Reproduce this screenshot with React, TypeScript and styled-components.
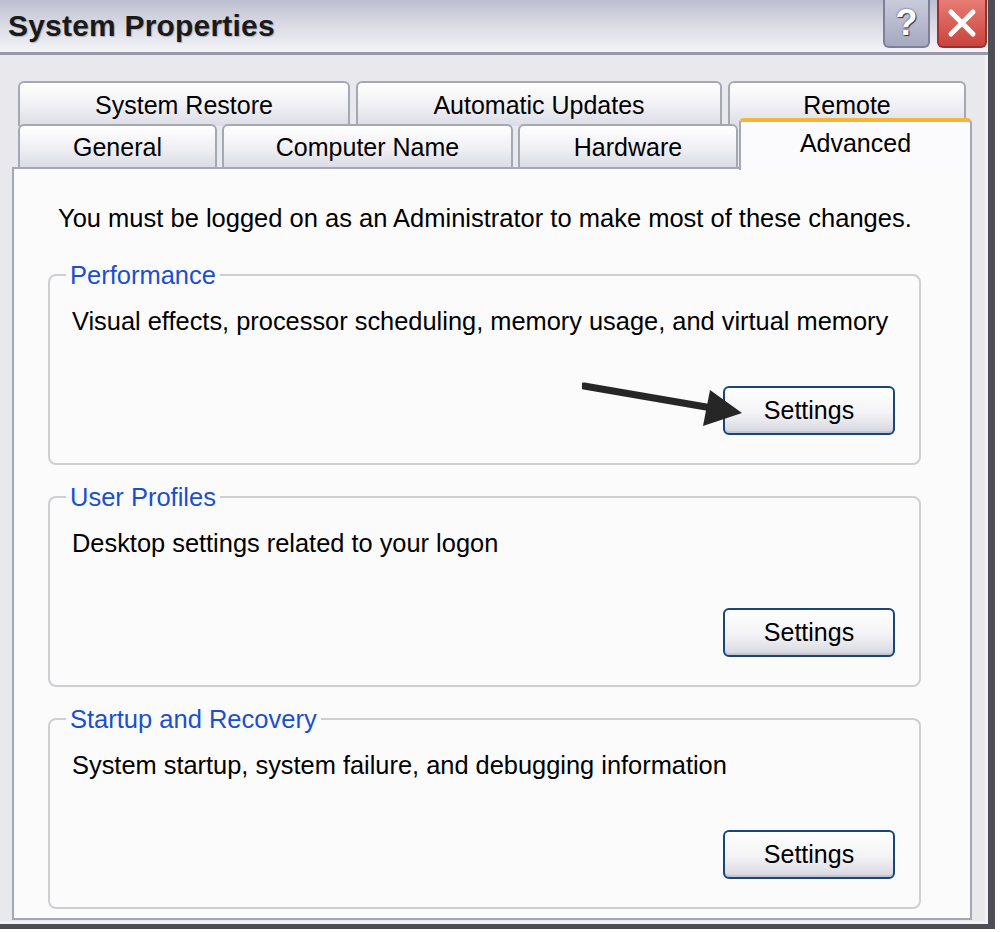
import styled, { createGlobalStyle } from "styled-components";

const GlobalStyle = createGlobalStyle`
  html, body {
    margin: 0;
    padding: 0;
    background: #ffffff;
  }
  body {
    font-family: "Liberation Sans", Arial, sans-serif;
  }
`;

type TabSpec = { label: string; width: number; selected?: boolean };

const backRow: TabSpec[] = [
  { label: "System Restore", width: 332 },
  { label: "Automatic Updates", width: 366 },
  { label: "Remote", width: 238 },
];

const frontRow: TabSpec[] = [
  { label: "General", width: 199 },
  { label: "Computer Name", width: 291 },
  { label: "Hardware", width: 220 },
  { label: "Advanced", width: 233, selected: true },
];

const groups = [
  {
    title: "Performance",
    text: "Visual effects, processor scheduling, memory usage, and virtual memory",
    arrow: true,
  },
  { title: "User Profiles", text: "Desktop settings related to your logon" },
  {
    title: "Startup and Recovery",
    text: "System startup, system failure, and debugging information",
  },
];

export default function App() {
  return (
    <>
      <GlobalStyle />
      <Window>
        <TitleBar>
          <Title>System Properties</Title>
          <Controls>
            <HelpButton>?</HelpButton>
            <CloseButton>
              <svg width="34" height="34" viewBox="0 0 34 34">
                <path
                  d="M6 6 L28 28 M28 6 L6 28"
                  stroke="#ffffff"
                  strokeWidth="5"
                  strokeLinecap="round"
                />
              </svg>
            </CloseButton>
          </Controls>
        </TitleBar>
        <Body>
          <TabRow $front={false}>
            {backRow.map((t) => (
              <Tab key={t.label} $width={t.width}>
                {t.label}
              </Tab>
            ))}
          </TabRow>
          <TabRow $front>
            {frontRow.map((t) =>
              t.selected ? (
                <SelectedTab key={t.label} $width={t.width}>
                  {t.label}
                </SelectedTab>
              ) : (
                <Tab key={t.label} $width={t.width}>
                  {t.label}
                </Tab>
              )
            )}
          </TabRow>
          <Panel>
            <Intro>
              You must be logged on as an Administrator to make most of these
              changes.
            </Intro>
            {groups.map((g) => (
              <Group key={g.title}>
                <Legend>{g.title}</Legend>
                <Description>{g.text}</Description>
                <ButtonRow>
                  <Button>Settings</Button>
                </ButtonRow>
                {g.arrow && <Arrow />}
              </Group>
            ))}
          </Panel>
        </Body>
      </Window>
    </>
  );
}

// hand-drawn pointer from the screenshot, sits over the Performance box
const Arrow = () => (
  <ArrowSvg width="170" height="60" viewBox="0 0 170 60">
    <path d="M2 8 L130 30" stroke="#262626" strokeWidth="7" strokeLinecap="round" />
    <path d="M160 35 L128 12 L121 48 Z" fill="#262626" />
  </ArrowSvg>
);

const Window = styled.div`
  width: 995px;
  height: 929px;
  box-sizing: border-box;
  display: flex;
  flex-direction: column;
  background: #e9e9ed;
  border-right: 7px solid #4d4d55;
  border-bottom: 5px solid #4d4d55;
  box-shadow: inset -3px -3px 0 #f3f3f5;
`;

const TitleBar = styled.div`
  height: 52px;
  flex: none;
  display: flex;
  align-items: flex-start;
  justify-content: space-between;
  background: linear-gradient(#bcbfcf 0%, #d8d9e3 45%, #f4f4f8 100%);
  border-bottom: 3px solid #9899a8;
`;

const Title = styled.div`
  padding: 9px 0 0 8px;
  font-family: "Liberation Sans", Arial, sans-serif;
  font-weight: 700;
  font-size: 30px;
  letter-spacing: 0.2px;
  color: #1a1a1a;
  text-shadow: 1px 1px 1px #b0b0bc;
`;

const Controls = styled.div`
  display: flex;
  gap: 7px;
  padding-right: 1px;
`;

const HelpButton = styled.div`
  width: 47px;
  height: 48px;
  box-sizing: border-box;
  display: flex;
  align-items: center;
  justify-content: center;
  border: 2px solid #7d8098;
  border-top: none;
  border-radius: 0 0 6px 6px;
  background: linear-gradient(#c9cadb, #a7a9c2);
  font-size: 36px;
  font-weight: 700;
  color: #ffffff;
  text-shadow: 0 0 2px #3a3c58, 1px 1px 0 #3a3c58;
`;

const CloseButton = styled.div`
  width: 50px;
  height: 48px;
  box-sizing: border-box;
  display: flex;
  align-items: center;
  justify-content: center;
  border: 2px solid #9a3030;
  border-top: none;
  border-radius: 0 0 6px 6px;
  background: linear-gradient(#e87c74, #c8443c);
`;

const Body = styled.div`
  flex: 1;
  display: flex;
  flex-direction: column;
  padding: 26px 16px 4px 12px;
`;

const TabRow = styled.div<{ $front: boolean }>`
  display: flex;
  align-items: flex-end;
  gap: ${(p) => (p.$front ? 5 : 6)}px;
  height: ${(p) => (p.$front ? 43 : 45)}px;
  margin-left: 6px;
  margin-top: ${(p) => (p.$front ? -2 : 0)}px;
  position: relative;
`;

const Tab = styled.div<{ $width: number }>`
  width: ${(p) => p.$width}px;
  height: 100%;
  box-sizing: border-box;
  display: flex;
  align-items: center;
  justify-content: center;
  padding-top: 2px;
  border: 2px solid #a3a8b4;
  border-bottom: none;
  border-radius: 6px 6px 0 0;
  background: linear-gradient(#ffffff 0%, #f1f1f5 50%, #dcdce6 100%);
  font-size: 25px;
  color: #000000;
`;

const SelectedTab = styled(Tab)`
  height: 52px;
  margin-left: -4px;
  margin-bottom: -3px;
  padding-top: 0;
  padding-bottom: 6px;
  position: relative;
  z-index: 2;
  background: #fbfbfd;
  border-top: 4px solid #f5b537;
  border-radius: 5px 5px 0 0;
`;

const Panel = styled.div`
  flex: 1;
  box-sizing: border-box;
  display: flex;
  flex-direction: column;
  gap: 17px;
  padding: 34px 0 0 34px;
  border: 2px solid #a3a8b4;
  background: #fbfbfb;
`;

const Intro = styled.div`
  margin: 0 0 10px 10px;
  font-size: 25.5px;
  line-height: 30px;
  color: #000000;
`;

const Group = styled.fieldset`
  position: relative;
  width: 873px;
  margin: 0;
  box-sizing: border-box;
  padding: 16px 24px 28px 22px;
  border: 2px solid #cfcfd3;
  border-radius: 8px;
  min-width: 0;
`;

const Legend = styled.legend`
  margin-left: -6px;
  padding: 0 4px;
  font-size: 25.5px;
  line-height: 30px;
  color: #1a4fd0;
`;

const Description = styled.div`
  font-size: 25.4px;
  line-height: 30px;
  color: #000000;
`;

const ButtonRow = styled.div`
  display: flex;
  justify-content: flex-end;
  margin-top: 50px;
`;

const Button = styled.div`
  width: 172px;
  height: 49px;
  box-sizing: border-box;
  display: flex;
  align-items: center;
  justify-content: center;
  border: 2px solid #17457c;
  border-radius: 6px;
  background: linear-gradient(#ffffff 0%, #f3f3f6 55%, #d6d6e0 100%);
  box-shadow: inset 0 -2px 0 #c4c4d2;
  font-size: 25px;
  color: #000000;
`;

const ArrowSvg = styled.svg`
  position: absolute;
  left: 532px;
  top: 88px;
`;
